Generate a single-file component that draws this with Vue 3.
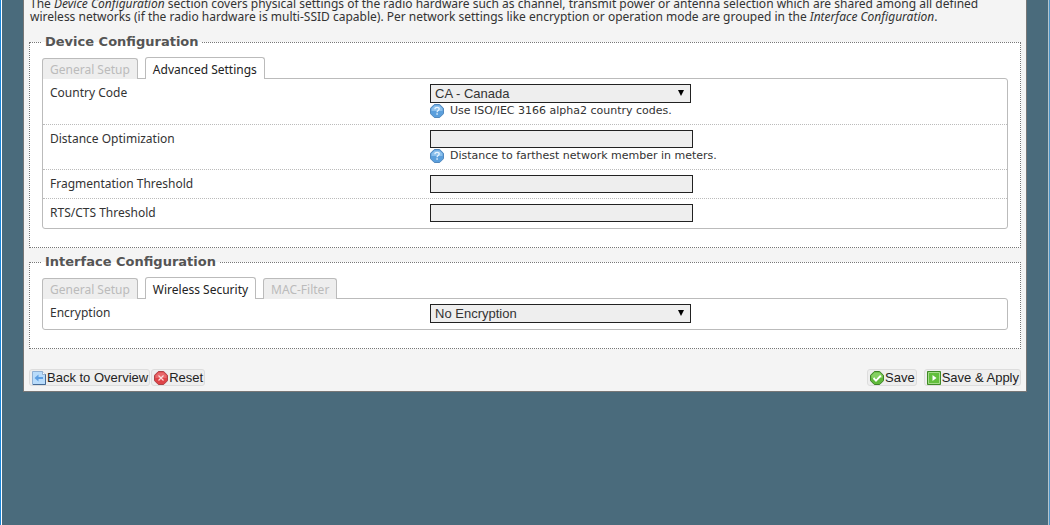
<script setup>
import { ref } from 'vue'

const sections = ref([
  {
    title: 'Device Configuration',
    tabs: ['General Setup', 'Advanced Settings'],
    active: 'Advanced Settings',
    fields: [
      { id: 'country', label: 'Country Code', type: 'select', value: 'CA - Canada', hint: 'Use ISO/IEC 3166 alpha2 country codes.' },
      { id: 'distance', label: 'Distance Optimization', type: 'text', value: '', hint: 'Distance to farthest network member in meters.' },
      { id: 'frag', label: 'Fragmentation Threshold', type: 'text', value: '' },
      { id: 'rts', label: 'RTS/CTS Threshold', type: 'text', value: '' },
    ],
  },
  {
    title: 'Interface Configuration',
    tabs: ['General Setup', 'Wireless Security', 'MAC-Filter'],
    active: 'Wireless Security',
    fields: [
      { id: 'encryption', label: 'Encryption', type: 'select', value: 'No Encryption' },
    ],
  },
])
</script>

<template>
  <div class="page">
    <main class="panel">
      <p class="intro">
        The <em>Device Configuration</em> section covers physical settings of the radio hardware such as channel, transmit power or antenna selection which are shared among all defined wireless networks (if the radio hardware is multi-SSID capable). Per network settings like encryption or operation mode are grouped in the <em>Interface Configuration</em>.
      </p>

      <form @submit.prevent>
        <fieldset v-for="s in sections" :key="s.title" class="section">
          <legend>{{ s.title }}</legend>
          <div class="tabs">
            <button
              v-for="t in s.tabs"
              :key="t"
              type="button"
              class="tab"
              :class="{ active: t === s.active }"
              @click="s.active = t"
            >{{ t }}</button>
          </div>
          <div class="box">
            <div v-for="f in s.fields" :key="f.id" class="row">
              <label :for="f.id">{{ f.label }}</label>
              <div class="field">
                <div v-if="f.type === 'select'" class="pick">
                  <select :id="f.id">
                    <option>{{ f.value }}</option>
                  </select>
                  <svg class="arrow" width="6" height="6" viewBox="0 0 6 6"><path d="M0 0h6L3 6z" fill="#000" /></svg>
                </div>
                <input v-else :id="f.id" v-model="f.value" type="text" />
                <div v-if="f.hint" class="hint">
                  <svg width="14" height="14" viewBox="0 0 14 14">
                    <path d="M4.3.5h5.4l3.8 3.8v5.4l-3.8 3.8H4.3L.5 9.7V4.3z" fill="#5b9fdc" stroke="#5288bd" />
                    <path d="M4.6 1.5h4.8l3.1 3.1V7h-11V4.6z" fill="#8cc0ec" />
                    <path d="M4.9 5.2c0-2.6 4.3-2.4 4.3-.2C9.2 6.6 7.1 6.4 7.1 8.2" fill="none" stroke="#eaf5ff" stroke-width="1.3" />
                    <path d="M6.4 9.3h1.4v1.4H6.4z" fill="#eaf5ff" />
                  </svg>
                  <span>{{ f.hint }}</span>
                </div>
              </div>
            </div>
          </div>
        </fieldset>

        <div class="actions">
          <button type="button" class="action">
            <svg width="14" height="14" viewBox="0 0 14 14">
              <path d="M.5.5h10l3 3v10H.5z" fill="#b9dcfb" stroke="#8fb0d4" />
              <path d="M13.5 3v10.5H1" fill="none" stroke="#456a95" />
              <path d="M10.5.5v3h3" fill="#fff" stroke="#7899bb" stroke-width=".7" />
              <path d="M2.500 7L6.500 3.500V6H11v2H6.500v2.500z" fill="#5d9fe3" />
            </svg>
            Back to Overview
          </button>
          <button type="reset" class="action">
            <svg width="14" height="14" viewBox="0 0 14 14">
              <path d="M4.3.5h5.4l3.8 3.8v5.4l-3.8 3.8H4.3L.5 9.7V4.3z" fill="#de4448" stroke="#ad4348" />
              <path d="M4.5 1.5h5l3 3V7h-11V4.5z" fill="#e8686b" />
              <path d="M4.5 4.5l5 5m0-5l-5 5" stroke="#fbdcdc" stroke-width="1.2" />
            </svg>
            Reset
          </button>
          <span class="spacer"></span>
          <button type="submit" class="action save">
            <svg width="14" height="14" viewBox="0 0 14 14">
              <path d="M4.3.5h5.4l3.8 3.8v5.4l-3.8 3.8H4.3L.5 9.7V4.3z" fill="#5fb93a" stroke="#40802a" />
              <path d="M4.5 1.5h5l3 3V7h-11V4.5z" fill="#86d063" />
              <path d="M3.5 7l2.5 2.6 4.8-5" fill="none" stroke="#fff" stroke-width="2" />
            </svg>
            Save
          </button>
          <button type="submit" class="action">
            <svg width="14" height="14" viewBox="0 0 14 14">
              <path d="M.5.5h13v13H.5z" fill="#62bf3c" stroke="#3f8a27" />
              <path d="M1.5 1.5h11v11h-11z" fill="none" stroke="#a5dc8a" />
              <path d="M5.5 4L9.5 7l-4 3z" fill="#fff" />
            </svg>
            Save &amp; Apply
          </button>
        </div>
      </form>
    </main>
  </div>
</template>

<style>
html,
body {
  background: #4a6b7c;
  margin: 0;
}
</style>

<style scoped>
.page {
  min-height: 100vh;
  box-sizing: border-box;
  display: flow-root;
  padding: 0 22px;
  border-left: 1px solid #1b86d9;
  border-right: 1px solid #4b94c8;
  box-shadow: inset 1px 0 #fff, inset -1px 0 #b5c4cc;
  background: #4a6b7c;
  font: 12px/13px "Noto Sans", sans-serif;
  color: #333;
  overflow: hidden;
}
.panel {
  background: #f4f4f4;
  border: 1px solid #777;
  border-top: 0;
  padding: 0 5px 5px;
}
.intro {
  margin: -3px 0 12px;
  padding-left: 1px;
}
.section {
  min-width: 0;
  margin: 0 0 7px;
  padding: 8px 12px 18px;
  border: 1px dotted #777;
  background: #fff;
}
legend {
  padding: 0 3px;
  font: bold 13px/14px "DejaVu Sans", sans-serif;
  color: #555;
}
.tabs {
  display: flex;
  align-items: flex-end;
  gap: 7px;
  margin-bottom: -1px;
  position: relative;
}
.tab {
  height: 21px;
  padding: 1px 7px 0;
  border: 1px solid #bbb;
  border-bottom: 0;
  border-radius: 3px 3px 0 0;
  background: #eee;
  color: #bbb;
  font: inherit;
}
.tab.active {
  height: 22px;
  background: #fff;
  color: #222;
}
.box {
  padding-bottom: 1px;
  border: 1px solid #bbb;
  border-radius: 0 3px 3px 3px;
}
.row {
  display: grid;
  grid-template-columns: 2fr 3fr;
  padding: 5px 7px;
}
.row + .row {
  border-top: 1px dotted #bbb;
}
label {
  padding-top: 2px;
}
.pick {
  position: relative;
  width: 261px;
}
select,
input {
  display: block;
  box-sizing: border-box;
  width: 263px;
  height: 18px;
  margin: 0;
  padding: 0 4px;
  border: 1px solid #222;
  border-radius: 0;
  background: #eee;
  color: #333;
  font: 13px "Liberation Sans", sans-serif;
}
select {
  width: 261px;
  height: 19px;
  appearance: none;
}
.arrow {
  position: absolute;
  right: 7px;
  top: 6px;
  pointer-events: none;
}
.hint {
  display: flex;
  align-items: center;
  gap: 6px;
  height: 16px;
  font: 11px/16px "DejaVu Sans", sans-serif;
}
.actions {
  display: flex;
  gap: 1px;
  padding-top: 13px;
}
.spacer {
  flex: 1;
}
.action {
  display: flex;
  align-items: center;
  gap: 1px;
  height: 17px;
  padding: 0 1px 0 2px;
  border: 1px solid #ddd;
  border-radius: 3px;
  background: #eee;
  color: #222;
  font: 13px/15px "Liberation Sans", sans-serif;
}
.save {
  margin-right: 6px;
}
</style>
